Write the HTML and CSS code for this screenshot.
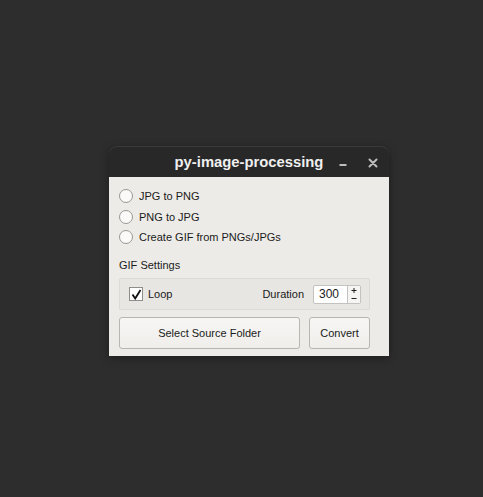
FILE: index.html
```html
<!DOCTYPE html>
<html>
<head>
<meta charset="utf-8">
<link rel="stylesheet" href="styles.css">
</head>
<body>
<div class="window">
  <div class="titlebar">
    <span></span>
    <span class="title">py-image-processing</span>
    <span class="controls">
      <span class="tb-btn min"><svg width="10" height="10" viewBox="0 0 10 10"><path d="M1.5 8 H8.5" stroke="#bdbdbd" stroke-width="2"/></svg></span>
      <span class="tb-btn close">
        <svg width="10" height="10" viewBox="0 0 10 10"><path d="M1.5 1.5 L8.5 8.5 M8.5 1.5 L1.5 8.5" stroke="#bdbdbd" stroke-width="2" stroke-linecap="round"/></svg>
      </span>
    </span>
  </div>
  <div class="content">
    <div class="radios">
      <label class="radio"><span class="circle"></span>JPG to PNG</label>
      <label class="radio"><span class="circle"></span>PNG to JPG</label>
      <label class="radio"><span class="circle"></span>Create GIF from PNGs/JPGs</label>
    </div>
    <div class="section-label">GIF Settings</div>
    <div class="frame">
      <span class="check">
        <svg width="11" height="11" viewBox="0 0 11 11"><path d="M1.5 5.5 L4.2 9.5 L9.5 1" fill="none" stroke="#111" stroke-width="1.8"/></svg>
      </span>
      <span class="loop">Loop</span>
      <span class="dur">Duration</span>
      <span class="spin">
        <span class="spin-val">300</span>
        <span class="spin-arrows">
          <svg width="12" height="17" viewBox="0 0 12 17"><path d="M3.5 4.5 H8.5 M6 2 V7 M3.5 12.5 H8.5" stroke="#222" stroke-width="1"/></svg>
        </span>
      </span>
    </div>
    <div class="buttons">
      <button class="btn wide">Select Source Folder</button>
      <button class="btn">Convert</button>
    </div>
  </div>
</div>
</body>
</html>
```
FILE: styles.css
```css
html, body {
  margin: 0;
  padding: 0;
  background: #2d2d2d;
  height: 100%;
}
body {
  padding: 146px 0 0 109px;
  box-sizing: border-box;
  font-family: "Liberation Sans", Arial, sans-serif;
  font-size: 11px;
  color: #1a1a1a;
}
.window {
  width: 280px;
  border-radius: 8px 8px 0 0;
  box-shadow: 0 2px 8px rgba(0,0,0,0.35);
}
.titlebar {
  height: 31px;
  background: #282828;
  border-radius: 8px 8px 0 0;
  box-shadow: inset 0 1px 0 #3a3a3a;
  display: grid;
  grid-template-columns: 1fr auto 1fr;
  align-items: center;
  color: #f0f0f0;
}
.title {
  font-weight: bold;
  font-size: 14.8px;
  white-space: nowrap;
  text-align: center;
}
.controls {
  display: flex;
  justify-content: flex-end;
  padding-right: 6px;
  gap: 10px;
}
.tb-btn {
  width: 20px;
  height: 20px;
  display: flex;
  align-items: center;
  justify-content: center;
}
.min svg {
  margin-top: 2px;
}
.close {
  margin-top: 2px;
}
.content {
  background: #edebe7;
  padding: 12px 19px 8px 10px;
  height: 179px;
  box-sizing: border-box;
}
.radios {
  display: flex;
  flex-direction: column;
  gap: 6.5px;
}
.radio {
  display: flex;
  align-items: center;
  height: 14px;
  gap: 6px;
}
.circle {
  width: 12px;
  height: 12px;
  border: 1px solid #9a9894;
  border-radius: 50%;
  background: #fbfaf9;
  display: inline-block;
}
.section-label {
  margin-top: 15px;
  height: 13px;
  line-height: 13px;
}
.frame {
  margin-top: 6px;
  height: 32px;
  box-sizing: border-box;
  border: 1px solid #dcdad6;
  border-radius: 2px;
  background: #e8e6e2;
  display: flex;
  align-items: center;
  padding-left: 9px;
}
.check {
  width: 12px;
  height: 12px;
  border: 1px solid #8f8d89;
  background: #fff;
  display: flex;
  align-items: center;
  justify-content: center;
}
.loop {
  margin-left: 5px;
}
.dur {
  margin-left: auto;
  margin-right: 9px;
}
.spin {
  width: 48px;
  height: 19px;
  box-sizing: border-box;
  border: 1px solid #c4c2be;
  border-radius: 2px;
  background: #fff;
  display: flex;
  margin-right: 8px;
}
.spin-val {
  width: 34px;
  padding-left: 5px;
  box-sizing: border-box;
  line-height: 16px;
  font-size: 12px;
}
.spin-arrows {
  border-left: 1px solid #c4c2be;
  flex: 1;
  display: flex;
  align-items: center;
  justify-content: center;
  background: #f6f5f3;
}
.buttons {
  margin-top: 7px;
  display: flex;
  gap: 9px;
}
.btn {
  height: 32px;
  font-family: "Liberation Sans", Arial, sans-serif;
  font-size: 11px;
  color: #1a1a1a;
  border: 1px solid #b8b6b2;
  border-radius: 3px;
  background: linear-gradient(#f7f6f4, #efeeeb);
  padding: 0;
  width: 61px;
}
.btn.wide {
  width: 181px;
}
```
